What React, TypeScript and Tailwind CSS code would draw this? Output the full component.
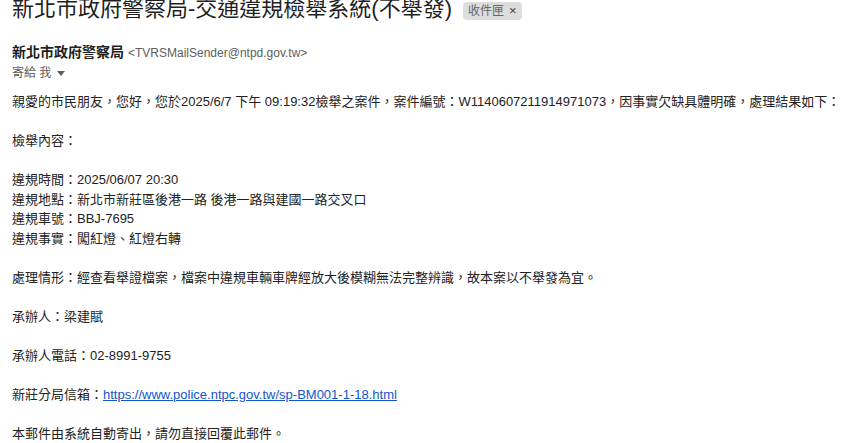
const font = { fontFamily: '"Liberation Sans", Arial, "Noto Sans CJK TC", sans-serif' }

const Badge = () => (
    <span className="ml-[11px] inline-flex items-center h-[18px] px-[5px] rounded-[4px] bg-[#dddddd] text-[12px] leading-[18px] text-[#666666] relative top-[2px]">
        收件匣
        <span className="ml-[5px] text-[13px] text-[#444]">×</span>
    </span>
)

const Line = ({ children }: { children?: React.ReactNode }) => (
    <div className="h-[19.5px] leading-[19.5px] whitespace-nowrap">{children ?? '\u00a0'}</div>
)

export default function App() {
    return (
        <div className="w-[851px] h-[443px] overflow-hidden bg-white text-[#222222]" style={font}>
            <div className="pl-[12px] -mt-[5px] flex items-center">
                <h2 className="text-[22px] leading-[28px] text-[#1f1f1f] font-normal whitespace-nowrap">
                    新北市政府警察局-交通違規檢舉系統(不舉發)
                </h2>
                <Badge />
            </div>

            <div className="pl-[12px] mt-[19px]">
                <div className="flex items-baseline whitespace-nowrap">
                    <span className="text-[14px] font-bold text-[#1f1f1f] leading-[20px]">新北市政府警察局</span>
                    <span className="ml-[4px] text-[12px] text-[#5e5e5e]">&lt;TVRSMailSender@ntpd.gov.tw&gt;</span>
                </div>
                <div className="flex items-center text-[12px] text-[#5e5e5e] leading-[20px] mt-[1px]">
                    寄給 我
                    <svg width="8" height="5" viewBox="0 0 8 5" className="ml-[6px]">
                        <path d="M0 0h8L4 5z" fill="#5e5e5e" />
                    </svg>
                </div>
            </div>

            <div className="pl-[12px] mt-[9px] text-[13px]">
                <Line>親愛的市民朋友，您好，您於2025/6/7 下午 09:19:32檢舉之案件，案件編號：W1140607211914971073，因事實欠缺具體明確，處理結果如下：</Line>
                <Line />
                <Line>檢舉內容：</Line>
                <Line />
                <Line>違規時間：2025/06/07 20:30</Line>
                <Line>違規地點：新北市新莊區後港一路 後港一路與建國一路交叉口</Line>
                <Line>違規車號：BBJ-7695</Line>
                <Line>違規事實：闖紅燈、紅燈右轉</Line>
                <Line />
                <Line>處理情形：經查看舉證檔案，檔案中違規車輛車牌經放大後模糊無法完整辨識，故本案以不舉發為宜。</Line>
                <Line />
                <Line>承辦人：梁建賦</Line>
                <Line />
                <Line>承辦人電話：02-8991-9755</Line>
                <Line />
                <Line>
                    新莊分局信箱：
                    <a href="#" className="text-[#1155cc] underline">https://www.police.ntpc.gov.tw/sp-BM001-1-18.html</a>
                </Line>
                <Line />
                <Line>本郵件由系統自動寄出，請勿直接回覆此郵件。</Line>
            </div>
        </div>
    )
}
